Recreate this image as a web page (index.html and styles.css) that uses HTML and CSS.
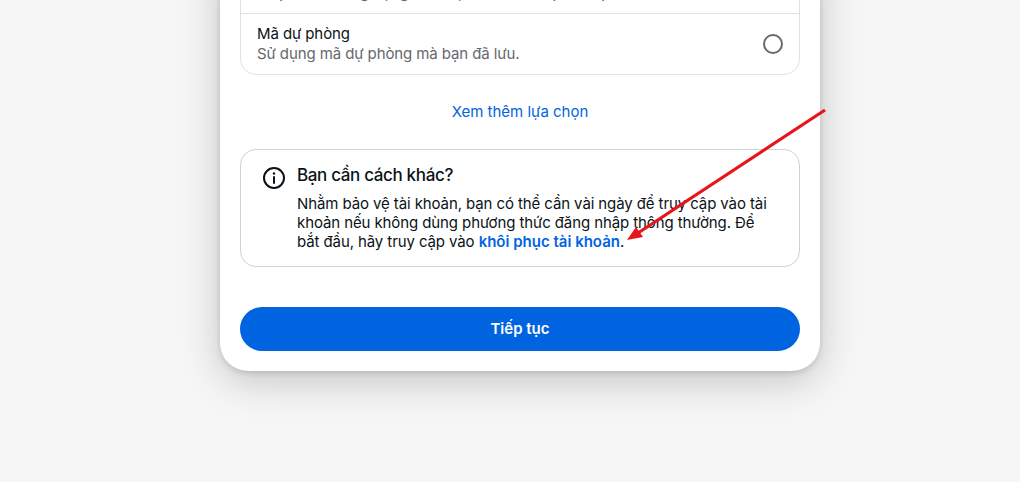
FILE: index.html
```html
<!DOCTYPE html>
<html lang="vi">
<head>
<meta charset="utf-8">
<title>Bạn cần cách khác?</title>
<link rel="stylesheet" href="styles.css">
</head>
<body>
<main class="card">
  <section class="options">
    <div class="option">
      <div class="option-text">
        <div class="option-title">Ứng dụng xác thực</div>
        <div class="option-desc">Nhận mã từ ứng dụng xác thực trên thiết bị của bạn.</div>
      </div>
    </div>
    <div class="option">
      <div class="option-text">
        <div class="option-title">Mã dự phòng</div>
        <div class="option-desc">Sử dụng mã dự phòng mà bạn đã lưu.</div>
      </div>
      <span class="radio"></span>
    </div>
  </section>
  <a class="more" href="#">Xem thêm lựa chọn</a>
  <section class="notice">
    <svg class="info" viewBox="0 0 24 24" width="24" height="24" fill="none" stroke="#0a1317" stroke-width="2">
      <circle cx="12" cy="12" r="10"/>
      <path d="M12 11v6" stroke-linecap="round"/>
      <circle cx="12" cy="7.5" r="1.2" fill="#0a1317" stroke="none"/>
    </svg>
    <div class="notice-body">
      <h2 class="notice-title">Bạn cần cách khác?</h2>
      <p class="notice-text">Nhằm bảo vệ tài khoản, bạn có thể cần vài ngày để truy cập vào tài khoản nếu không dùng phương thức đăng nhập thông thường. Để bắt đầu, hãy truy cập vào <a class="link" href="#">khôi phục tài khoản</a>.</p>
    </div>
  </section>
  <button class="continue" type="button">Tiếp tục</button>
</main>
<svg class="arrow" viewBox="0 0 1020 482" width="1020" height="482">
  <path d="M825 110 L638 233" stroke="#e8141c" stroke-width="3.2" fill="none"/>
  <path d="M627 240 L636 227 L643 237 Z" fill="#e8141c"/>
</svg>
</body>
</html>
```
FILE: styles.css
```css
* { box-sizing: border-box; }
html, body { margin: 0; height: 482px; overflow: hidden; }
body {
  background: #f6f6f6;
  font-family: Inter, "Liberation Sans", sans-serif;
  color: #0a1317;
  display: flex;
  justify-content: flex-start;
  align-items: flex-end;
  position: relative;
  padding: 0 0 111px 220px;
}
.card {
  flex: none;
  width: 600px;
  background: #fff;
  border-radius: 0 0 28px 28px;
  padding: 0 20px 20px;
  box-shadow: 0 10px 40px rgba(0, 0, 0, 0.2), 0 2px 6px rgba(0, 0, 0, 0.14);
  display: flex;
  flex-direction: column;
}
.options {
  border: 1px solid #dfe1e4;
  border-radius: 16px;
  background: #fff;
}
.option {
  display: flex;
  align-items: center;
  justify-content: space-between;
  padding: 10px 16px;
  height: 61px;
}
.option + .option { border-top: 1px solid #dfe1e4; }
.option-title { font-size: 15px; line-height: 20px; letter-spacing: -0.1px; }
.option-desc { font-size: 15px; line-height: 20px; letter-spacing: -0.1px; color: #65686c; }
.radio {
  width: 20px;
  height: 20px;
  border: 2px solid #65686c;
  border-radius: 50%;
}
.more {
  align-self: center;
  margin-top: 27px;
  font-size: 15px;
  line-height: 20px;
  color: #0064e0;
  text-decoration: none;
}
.notice {
  margin-top: 27px;
  height: 118px;
  border: 1px solid #cfd2d6;
  border-radius: 16px;
  padding: 14px 16px 0 21px;
  display: flex;
  gap: 11px;
}
.info { flex: none; margin-top: 2px; }
.notice-body { width: 478px; }
.notice-title {
  margin: 0 0 8px;
  font-size: 17px;
  line-height: 22px;
  font-weight: 500;
  letter-spacing: -0.35px;
}
.notice-text {
  margin: 0;
  font-size: 15px;
  line-height: 19px;
  letter-spacing: -0.1px;
}
.link { color: #0064e0; font-weight: 600; letter-spacing: 0; text-decoration: none; }
.continue {
  margin-top: 40px;
  height: 44px;
  border: 0;
  border-radius: 22px;
  background: #0064e0;
  color: #fff;
  font: 600 15px/20px Inter, "Liberation Sans", sans-serif;
}
.arrow { position: absolute; left: 0; top: 0; pointer-events: none; }
```
